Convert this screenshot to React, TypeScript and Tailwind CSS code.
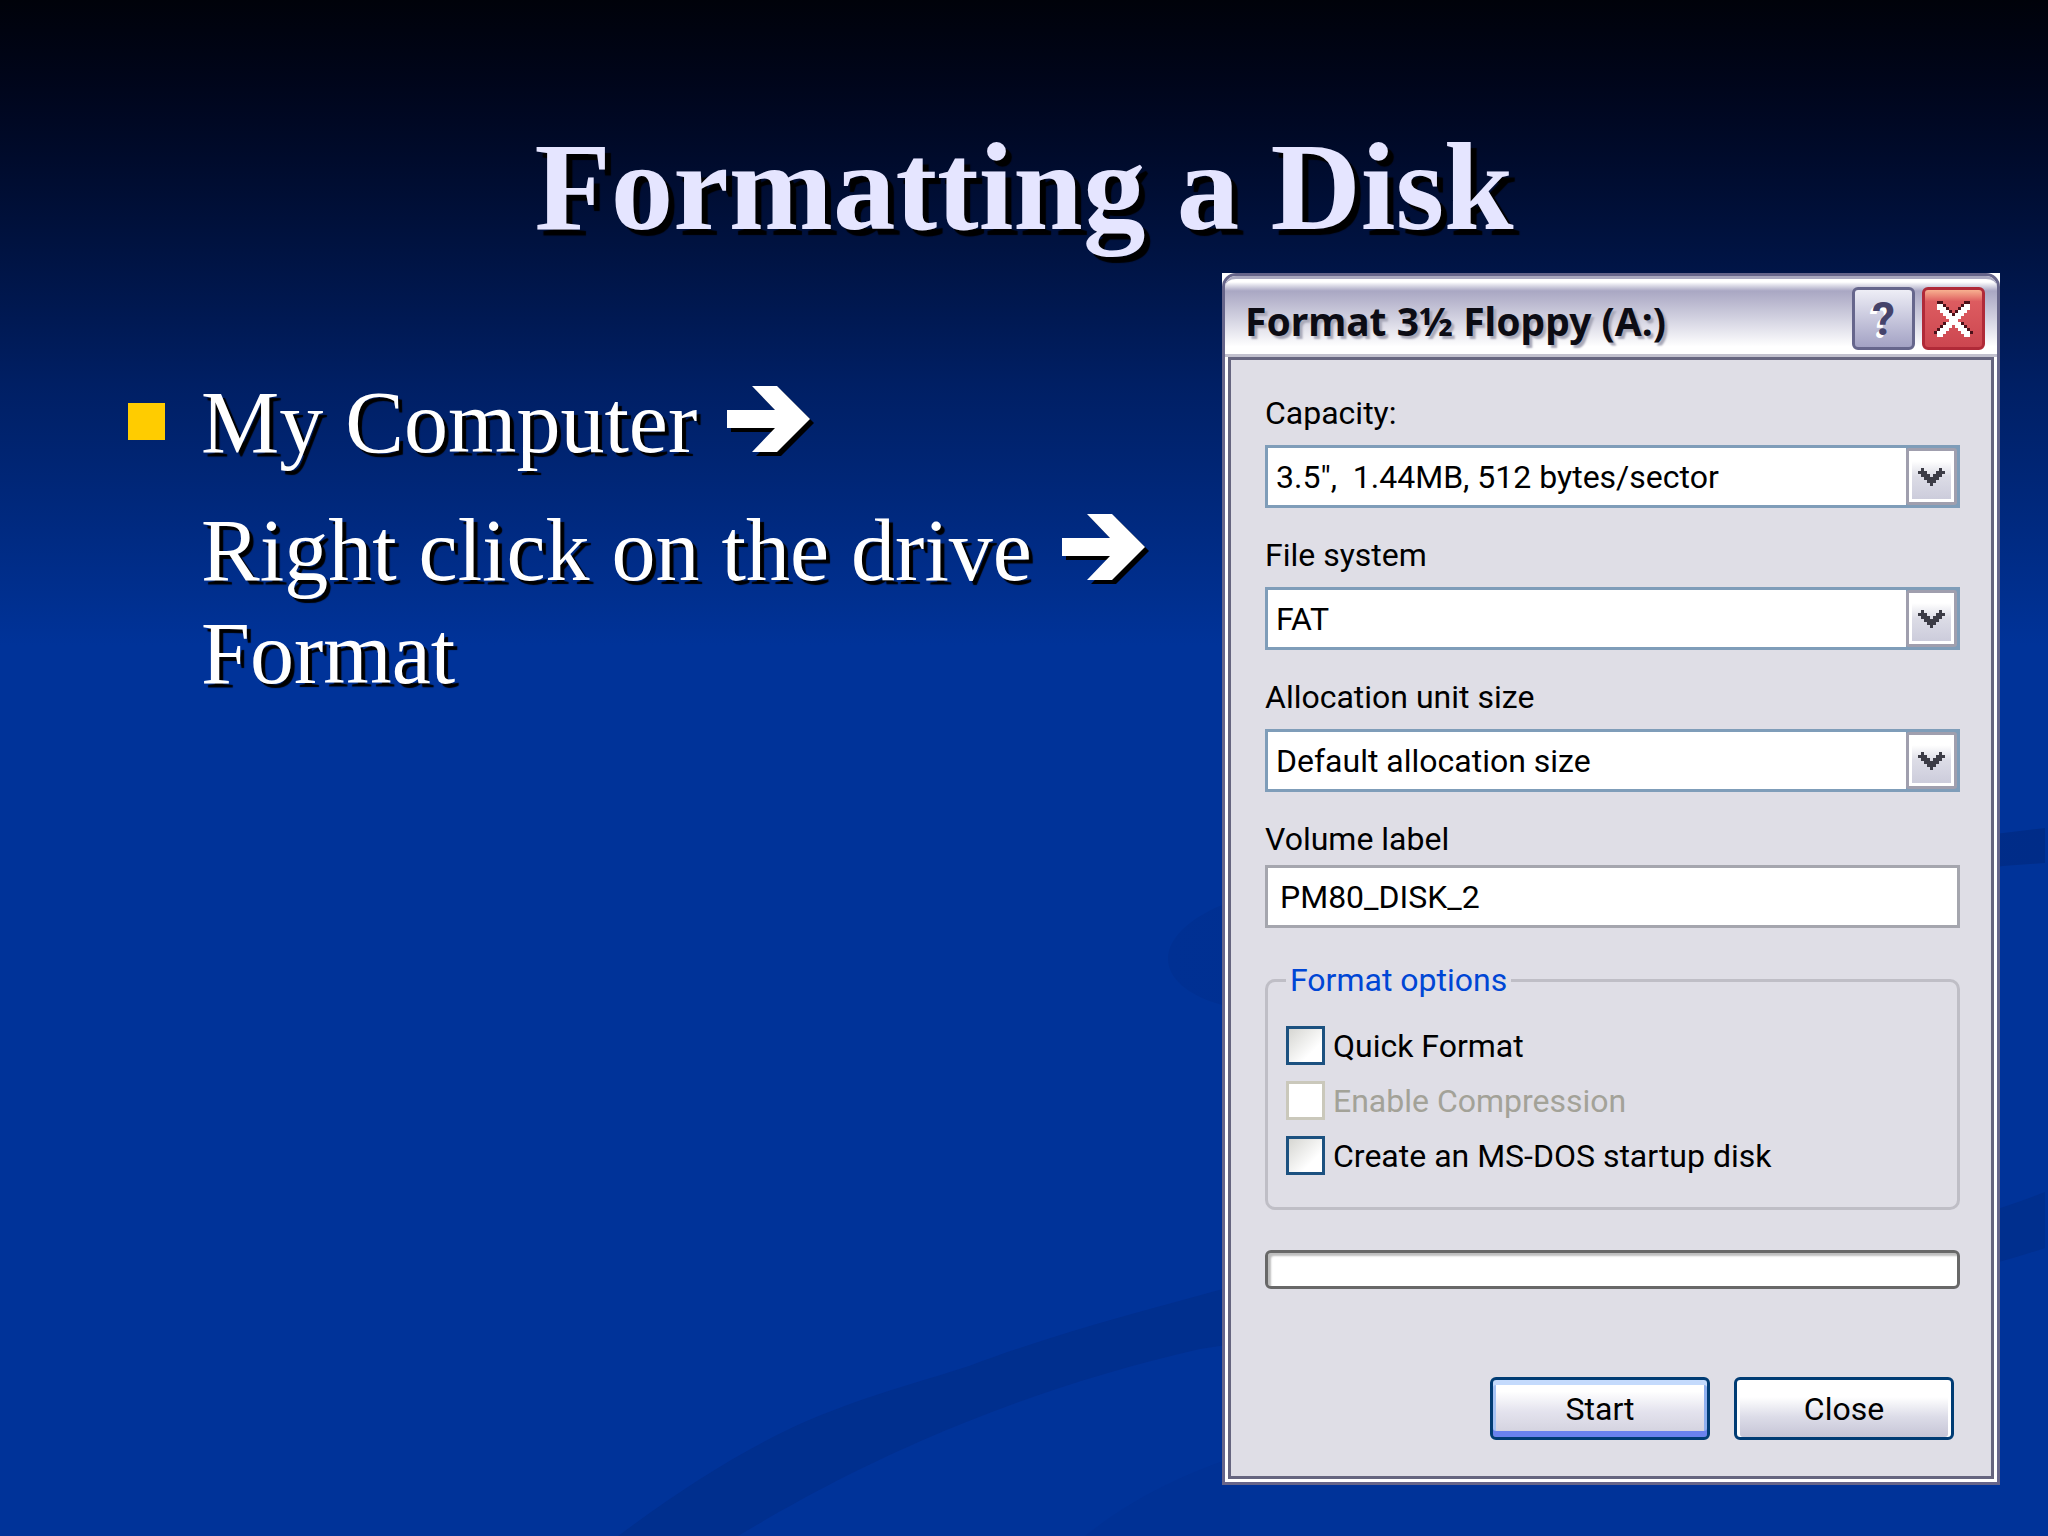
import { useState } from "react";
import type { ReactNode } from "react";

const CHEVRON = [
  ".#.....#.",
  "###...###",
  ".###.###.",
  "..#####..",
  "...###...",
  "....#....",
];

const CROSS = [
  ".KK.......KK.",
  ".WWK.....KWW.",
  ".WWWK...KWWW.",
  "..WWWK.KWWW..",
  "...WWWKWWW...",
  "....WWWWW....",
  ".....WWW.....",
  "...KWWWWWK...",
  "..KWWW.WWWK..",
  ".KWWW...WWWK.",
  "KWWW.....WWWK",
  ".WW.......WW.",
];

const PIXELS: Record<string, string> = {
  "#": "#3c3c46",
  K: "#4a1018",
  W: "#ffffff",
};

// Bitmap icon, one character per pixel
function PixelIcon({ rows, className }: { rows: string[]; className: string }) {
  return (
    <svg
      viewBox={`0 0 ${rows[0].length} ${rows.length}`}
      preserveAspectRatio="none"
      shapeRendering="crispEdges"
      className={className}
      aria-hidden="true"
    >
      {rows.flatMap((row, y) =>
        row
          .split("")
          .map((c, x) =>
            c === "." ? null : (
              <rect key={`${x}-${y}`} x={x} y={y} width={1} height={1} fill={PIXELS[c]} />
            )
          )
      )}
    </svg>
  );
}

function Arrow() {
  const points = "0,24 48,24 25,0 50,0 83,33 50,66 25,66 48,42 0,42";
  return (
    <svg viewBox="0 0 88 70" className="ml-2 inline-block h-[70px] w-[88px] align-[-4px]" aria-hidden="true">
      <polygon points={points} fill="#000" transform="translate(4 4)" />
      <polygon points={points} fill="#fff" />
    </svg>
  );
}

function Backdrop() {
  return (
    <svg
      viewBox="0 0 2048 1536"
      preserveAspectRatio="none"
      className="absolute inset-0 h-full w-full"
      aria-hidden="true"
    >
      <defs>
        <linearGradient id="ring" x1="0" x2="1">
          <stop offset="0" stopColor="#003093" />
          <stop offset="1" stopColor="#002c88" />
        </linearGradient>
      </defs>
      <path
        d="M618 1536 C680 1490 730 1458 785 1431 C850 1400 910 1385 969 1366 C1060 1332 1140 1312 1219 1290 C1500 1250 1800 1290 2045 1192 V1248 C1800 1330 1500 1300 1200 1349 C1100 1372 1010 1402 923 1440 C850 1472 795 1502 738 1536 Z"
        fill="#002f8e"
      />
      <path
        d="M1222 905 C1150 935 1150 985 1222 1005 L2003 866 L2045 863 V828 L2003 833 Z"
        fill="url(#ring)"
      />
      <path d="M1085 1536 C1130 1500 1180 1475 1240 1455 V1536 Z" fill="#003195" />
    </svg>
  );
}

type SelectFieldProps = {
  id: string;
  label: string;
  options: string[];
};

function SelectField({ id, label, options }: SelectFieldProps) {
  return (
    <div className="flex flex-col">
      <label htmlFor={id} className="mb-[14px] leading-9">
        {label}
      </label>
      <div className="relative">
        <select
          id={id}
          className="block h-[63px] w-full appearance-none border-3 border-[#7f9db9] bg-white pr-16 pl-2 outline-none"
        >
          {options.map((o) => (
            <option key={o}>{o}</option>
          ))}
        </select>
        <span className="pointer-events-none absolute inset-y-[3px] right-[3px] flex w-[51px] bg-[#7f9db9]">
          <span className="flex w-full items-center justify-center rounded-[3px] border-3 border-[#a09fae] bg-linear-to-b from-white from-20% via-[#dcdce6] via-50% to-[#cacada] ring-3 ring-white ring-inset">
            <PixelIcon rows={CHEVRON} className="h-[18px] w-[27px]" />
          </span>
        </span>
      </div>
    </div>
  );
}

function CheckRow({
  children,
  disabled = false,
}: {
  children: ReactNode;
  disabled?: boolean;
}) {
  return (
    <label className={`flex h-[39px] items-center gap-2 ${disabled ? "text-[#a3a298]" : ""}`}>
      <input
        type="checkbox"
        disabled={disabled}
        className="h-[39px] w-[39px] shrink-0 appearance-none border-3 border-[#1c5180] bg-linear-to-br from-[#d6d6d2] to-white to-70% checked:bg-[#21a121] disabled:border-[#cac8bb] disabled:bg-white disabled:bg-none"
      />
      {children}
    </label>
  );
}

function FormatDialog() {
  const [volume, setVolume] = useState("PM80_DISK_2");

  return (
    <div className="w-[38.9%] shrink-0 bg-white font-['Roboto','Noto_Sans',sans-serif] text-[32px] text-black">
      <div className="rounded-t-[14px] border-3 border-[#66658a] bg-white">
        {/* Title bar */}
        <div className="flex h-[81px] items-center justify-between rounded-t-[11px] border-t-3 border-b-3 border-t-[#a9a8bf] border-b-[#c2c1ce] bg-linear-to-b from-white from-4% via-[#a9a7c3] via-16% to-white to-90% pt-1 pr-3 pl-5">
          <h2 className="pt-1 font-['Noto_Sans','Open_Sans',sans-serif] text-[39px] leading-none font-bold text-[#0c0c14] [text-shadow:3px_3px_2px_#a8a8b8]">
            Format 3½ Floppy (A:)
          </h2>
          <div className="flex gap-[7px]">
            <button
              aria-label="Help"
              className="flex h-[63px] w-[63px] items-center justify-center rounded-md border-3 border-[#66668c] bg-linear-to-b from-[#eeeef6] to-[#a3a2c4] text-[46px] leading-none font-bold text-[#45436a] [text-shadow:-3px_3px_0_#fff]"
            >
              ?
            </button>
            <button
              aria-label="Close window"
              className="flex h-[63px] w-[63px] items-center justify-center rounded-md border-3 border-[#b02a38] bg-linear-to-b from-[#f7b090] via-[#dd5c60] via-20% to-[#cc4650]"
            >
              <PixelIcon rows={CROSS} className="h-9 w-[39px]" />
            </button>
          </div>
        </div>

        <div className="mx-[3px] mb-[3px] border-3 border-[#66657f] bg-[#dfdee6] pt-[35px] pr-[31px] pb-9 pl-[34px]">
          <div className="flex flex-col gap-[29px]">
            <SelectField
              id="capacity"
              label="Capacity:"
              options={["3.5\",\u00a0 1.44MB, 512 bytes/sector"]}
            />
            <SelectField id="fs" label="File system" options={["FAT"]} />
            <SelectField id="alloc" label="Allocation unit size" options={["Default allocation size"]} />
            <div className="flex flex-col">
              <label htmlFor="volume" className="mb-2 leading-9">
                Volume label
              </label>
              <input
                id="volume"
                value={volume}
                onChange={(e) => setVolume(e.target.value)}
                className="h-[63px] w-full border-3 border-[#a5a6ae] bg-white px-3 outline-none"
              />
            </div>
          </div>

          <fieldset className="mt-[34px] rounded-[10px] border-3 border-[#bfbec6] px-[18px] pb-8">
            <legend className="px-1 leading-9 text-[#0046d5]">Format options</legend>
            <div className="flex flex-col gap-4 pt-7">
              <CheckRow>Quick Format</CheckRow>
              <CheckRow disabled>Enable Compression</CheckRow>
              <CheckRow>Create an MS-DOS startup disk</CheckRow>
            </div>
          </fieldset>

          <progress
            value={0}
            max={100}
            aria-label="Format progress"
            className="mt-10 block h-[39px] w-full appearance-none rounded-md border-3 border-[#686868] bg-white shadow-[inset_3px_3px_2px_#bebebe] [&::-webkit-progress-bar]:bg-transparent [&::-webkit-progress-value]:bg-[#3fc33f]"
          />

          <div className="mt-[88px] flex justify-end gap-6 pr-[6px]">
            <button className="h-[63px] w-[220px] rounded-md border-3 border-[#003c74] bg-linear-to-b from-white from-20% via-[#e4e3ee] via-55% to-[#d0cfdc] shadow-[inset_0_5px_0_#c4dafc,inset_0_-6px_0_#6a82ee,inset_3px_0_0_#a5c3f5,inset_-3px_0_0_#8fb0f0]">
              Start
            </button>
            <button className="h-[63px] w-[220px] rounded-md border-3 border-[#003c74] bg-linear-to-b from-white from-30% via-[#dcdce8] via-65% to-[#c6c5d6] shadow-[inset_3px_0_0_#fff,inset_-3px_0_0_#fff]">
              Close
            </button>
          </div>
        </div>
      </div>
    </div>
  );
}

export default function App() {
  return (
    <main className="relative min-h-screen bg-[#003399] bg-linear-to-b from-[#00020a] from-0% via-[#001f64] via-25% to-[#003399] to-42% font-['Liberation_Serif',serif]">
      <Backdrop />
      <div className="relative">
        <header className="flex h-[273px] items-end justify-center pb-4">
          <h1 className="text-[125px] leading-[140px] font-bold text-[#e5e5ff] [text-shadow:6px_6px_1px_#000]">
            Formatting a Disk
          </h1>
        </header>
        <div className="flex items-start justify-between pr-12">
          <ul className="pt-[98px] pl-32 text-[88px] leading-[103px] text-white [text-shadow:4px_4px_1px_#000]">
            <li className="flex gap-9">
              <span className="mt-8 h-[37px] w-[37px] shrink-0 bg-[#ffcc00]" />
              <div className="flex flex-col gap-[25px]">
                <p>
                  My Computer <Arrow />
                </p>
                <p>
                  Right click on the drive <Arrow />
                  <br />
                  Format
                </p>
              </div>
            </li>
          </ul>
          <FormatDialog />
        </div>
      </div>
    </main>
  );
}
